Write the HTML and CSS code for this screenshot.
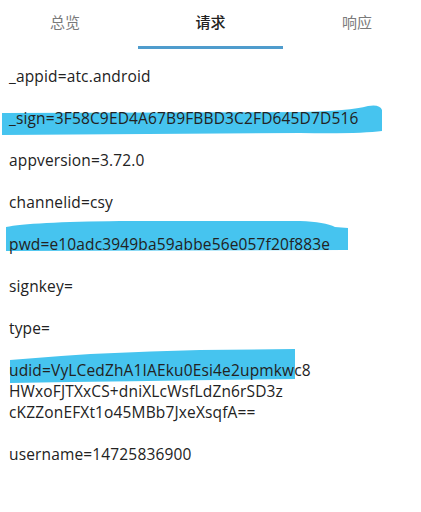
FILE: index.html
```html
<!DOCTYPE html>
<html lang="zh-CN">
<head>
    <meta charset="UTF-8">
    <meta name="viewport" content="width=device-width, initial-scale=1.0">
    <title>请求</title>
    <link rel="stylesheet" href="styles.css">
</head>
<body>
    <div class="page">
        <div class="tabs">
            <div class="tab tab-left">总览</div>
            <div class="tab active">请求</div>
            <div class="tab tab-right">响应</div>
        </div>

        <!-- marker strokes drawn over the screenshot -->
        <svg class="marks" width="421" height="512" viewBox="0 0 421 512">
            <path d="M2 113 L300 112 Q350 111 368 106 Q380 104 382 110 L382 131 Q360 134 300 133 L2 135 Z"/>
            <path d="M6 227 Q30 222 120 221 L300 221 Q325 222 335 227 L348 228 L348 250 L6 251 Z"/>
            <path d="M10 360 Q100 352 200 350 L295 349 L295 379 Q150 381 10 383 Z"/>
        </svg>

        <div class="params">
            <div class="param">_appid=atc.android</div>
            <div class="param">_sign=3F58C9ED4A67B9FBBD3C2FD645D7D516</div>
            <div class="param">appversion=3.72.0</div>
            <div class="param">channelid=csy</div>
            <div class="param">pwd=e10adc3949ba59abbe56e057f20f883e</div>
            <div class="param">signkey=</div>
            <div class="param">type=</div>
            <div class="param">udid=VyLCedZhA1IAEku0Esi4e2upmkwc8<br>HWxoFJTXxCS+dniXLcWsfLdZn6rSD3z<br>cKZZonEFXt1o45MBb7JxeXsqfA==</div>
            <div class="param">username=14725836900</div>
        </div>
    </div>
</body>
</html>
```

FILE: styles.css
```css
body {
    margin: 0;
    background: #fff;
    font-family: "Open Sans", "Noto Sans CJK SC", sans-serif;
    color: #222;
}
.page {
    position: relative;
    width: 421px;
    height: 512px;
    overflow: hidden;
    isolation: isolate;
}
.tabs {
    display: grid;
    grid-template-columns: 138px 145px 138px;
    height: 49px;
}
.tab {
    font-family: "Noto Sans CJK SC", sans-serif;
    font-size: 15px;
    line-height: 44px;
    text-align: center;
    color: #7a7a7a;
}
.tab-left {
    padding-right: 8px;
}
.tab-right {
    padding-left: 10px;
}
.tab.active {
    color: #222;
    font-weight: 500;
    border-bottom: 3px solid #4f9ccd;
    height: 46px;
}
.marks {
    position: absolute;
    top: 0;
    left: 0;
    z-index: -1;
}
.marks path {
    fill: #46c4ef;
}
.params {
    padding: 17px 0 0 9px;
}
.param {
    font-size: 15.5px;
    line-height: 21px;
    letter-spacing: 0.15px;
    margin-bottom: 21px;
    white-space: nowrap;
}
```
